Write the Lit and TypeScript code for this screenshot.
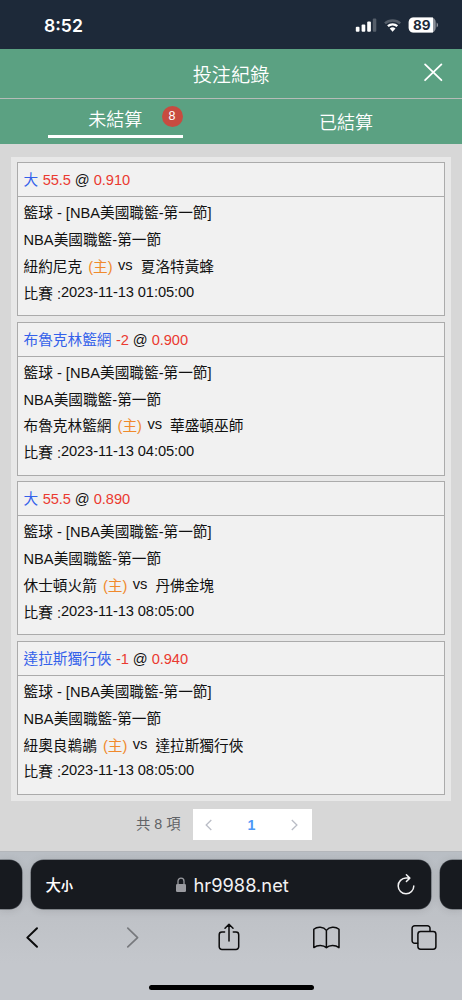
import { LitElement, html, css } from "lit";
import { customElement, property } from "lit/decorators.js";

interface Bet {
  pick: string;
  line: string;
  odds: string;
  home: string;
  away: string;
  time: string;
}

const BETS: Bet[] = [
  { pick: "大", line: "55.5", odds: "0.910", home: "紐約尼克", away: "夏洛特黃蜂", time: "2023-11-13 01:05:00" },
  { pick: "布魯克林籃網", line: "-2", odds: "0.900", home: "布魯克林籃網", away: "華盛頓巫師", time: "2023-11-13 04:05:00" },
  { pick: "大", line: "55.5", odds: "0.890", home: "休士頓火箭", away: "丹佛金塊", time: "2023-11-13 08:05:00" },
  { pick: "達拉斯獨行俠", line: "-1", odds: "0.940", home: "紐奧良鵜鶘", away: "達拉斯獨行俠", time: "2023-11-13 08:05:00" },
];

@customElement("status-bar")
class StatusBar extends LitElement {
  static styles = css`
    :host {
      display: flex;
      justify-content: space-between;
      box-sizing: border-box;
      height: 49px;
      padding: 0 24px 0 44px;
      background: #1d2939;
      color: #fff;
      font-family: Inter, sans-serif;
    }
    .time {
      padding-top: 14px;
      font-size: 17.6px;
      font-weight: 600;
      line-height: 23px;
    }
    .icons {
      display: flex;
      padding-top: 16px;
    }
    svg {
      display: block;
    }
    .level {
      font: 700 13.5px Inter, sans-serif;
    }
  `;
  render() {
    return html`
      <div class="time">8:52</div>
      <div class="icons">
        <svg width="84" height="18" viewBox="0 0 84 18">
          <g fill="#fff">
            <rect x="1.8" y="10.8" width="3.7" height="5" rx="1" />
            <rect x="7.6" y="8.6" width="3.7" height="7.2" rx="1" />
            <rect x="13.2" y="5.4" width="3.7" height="10.4" rx="1" />
            <rect x="18.8" y="2.6" width="3.5" height="13.2" rx="1" opacity=".25" />
          </g>
          <g fill="none" stroke="#fff">
            <path d="M31 7.4a11.2 11.2 0 0 1 15.2 0" stroke-width="2.5" opacity=".25" />
            <path d="M33.9 10.2a7 7 0 0 1 9.4 0" stroke-width="2.4" />
          </g>
          <path d="M35.7 12.4a4.4 4.4 0 0 1 5.8 0L38.6 15.8z" fill="#fff" />
          <rect x="54.7" y="1.4" width="27" height="15.2" rx="4.6" fill="#8b9099" />
          <path d="M59.3 1.4H79V16.6H59.3a4.6 4.6 0 0 1-4.6-4.6V6a4.6 4.6 0 0 1 4.6-4.6z" fill="#fff" />
          <path d="M82.6 6.6v4.8a2.7 2.7 0 0 0 0-4.8z" fill="#8b9099" />
          <text class="level" x="67.7" y="13.9" text-anchor="middle" fill="#1d2939">89</text>
        </svg>
      </div>
    `;
  }
}

@customElement("page-header")
class PageHeader extends LitElement {
  static styles = css`
    :host {
      display: block;
      background: #5ba182;
      color: #fff;
      font-family: "Noto Sans CJK TC", sans-serif;
      font-weight: 350;
    }
    .title-row {
      display: grid;
      grid-template-columns: 60px 1fr 60px;
      box-sizing: border-box;
      height: 50px;
      border-bottom: 1px solid #b5bcb8;
    }
    .title {
      grid-column: 2;
      text-align: center;
      font-size: 19.2px;
      line-height: 50px;
    }
    .close {
      padding: 13px 0 0 20px;
    }
    svg {
      display: block;
    }
    .tabs {
      display: grid;
      grid-template-columns: 1fr 1fr;
      height: 45px;
      font-size: 18px;
    }
    .tab {
      display: flex;
      justify-content: center;
    }
    .active {
      position: relative;
      box-sizing: border-box;
      width: 134.5px;
      height: 39px;
      margin-left: 48px;
      border-bottom: 3px solid #fff;
      line-height: 38px;
    }
    .settled {
      line-height: 45px;
      padding-right: 1px;
    }
    .badge {
      position: absolute;
      right: 0;
      top: 6.5px;
      width: 21px;
      height: 21px;
      border-radius: 50%;
      background: #c84b40;
      font: 12.5px/21px "Liberation Sans", sans-serif;
      text-align: center;
    }
  `;
  render() {
    return html`
      <div class="title-row">
        <div class="title">投注紀錄</div>
        <div class="close">
          <svg width="22" height="22" viewBox="0 0 22 22" fill="none" stroke="#fff" stroke-width="1.8" stroke-linecap="round">
            <path d="M3.1 2.4 19.4 18.2M19.4 2.4 3.1 18.2" />
          </svg>
        </div>
      </div>
      <div class="tabs">
        <div class="tab active">未結算<span class="badge">8</span></div>
        <div class="tab settled">已結算</div>
      </div>
    `;
  }
}

@customElement("bet-card")
class BetCard extends LitElement {
  @property({ attribute: false }) bet!: Bet;

  static styles = css`
    :host {
      display: block;
      box-sizing: border-box;
      height: 154px;
      border: 1px solid #ababab;
      background: #f1f1f1;
      color: #111;
      font: 14.67px "Liberation Sans", "Noto Sans CJK TC", sans-serif;
    }
    .head {
      height: 33px;
      padding-left: 5.5px;
      border-bottom: 1px solid #ababab;
      line-height: 34px;
      white-space: pre;
    }
    .body {
      padding: 3.2px 0 0 5.5px;
    }
    .row {
      height: 26.8px;
      line-height: 27px;
      white-space: pre;
    }
    .pick {
      margin-right: 0.4px;
      color: #3461ea;
    }
    .red {
      color: #ea3a30;
      letter-spacing: -0.1px;
    }
    .host {
      margin: 0 1.5px 0 2px;
      color: #f08a2c;
    }
    .up {
      line-height: 20px;
      vertical-align: 2px;
      letter-spacing: -0.1px;
    }
    .away {
      margin-left: 4.2px;
    }
  `;
  render() {
    const b = this.bet;
    return html`
      <div class="head"><span class="pick">${b.pick}</span> <span class="red">${b.line}</span> @ <span class="red">${b.odds}</span></div>
      <div class="body">
        <div class="row">籃球 - [NBA美國職籃-第一節]</div>
        <div class="row">NBA美國職籃-第一節</div>
        <div class="row">${b.home} <span class="host">(主)</span><span class="up"> vs </span><span class="away">${b.away}</span></div>
        <div class="row">比賽 :<span class="up">${b.time}</span></div>
      </div>
    `;
  }
}

@customElement("list-pager")
class ListPager extends LitElement {
  static styles = css`
    :host {
      display: flex;
      padding: 8px 0 0 136px;
      font: 14.3px "Liberation Sans", "Noto Sans CJK TC", sans-serif;
    }
    .total {
      width: 57px;
      color: #616366;
      line-height: 31px;
      white-space: nowrap;
    }
    .pages {
      display: grid;
      grid-template-columns: 1fr 1fr 1fr;
      place-items: center;
      width: 119px;
      height: 31px;
      background: #fff;
    }
    .current {
      color: #4c98f7;
      font-weight: 700;
      padding-right: 2px;
    }
    svg {
      display: block;
      fill: none;
      stroke: #babdc6;
      stroke-width: 1.3;
    }
    .back {
      margin-right: 5px;
    }
    .forward {
      margin-left: 2px;
    }
  `;
  render() {
    return html`
      <div class="total">共 8 項</div>
      <div class="pages">
        <svg class="back" width="12" height="12" viewBox="0 0 12 12"><path d="M7.3 1 2.2 6l5.1 5" /></svg>
        <span class="current">1</span>
        <svg class="forward" width="12" height="12" viewBox="0 0 12 12"><path d="M4.8 1 9.9 6l-5.1 5" /></svg>
      </div>
    `;
  }
}

@customElement("browser-bar")
class BrowserBar extends LitElement {
  static styles = css`
    :host {
      display: block;
      box-sizing: border-box;
      height: 149px;
      border-top: 1px solid #b4b7bb;
      background: linear-gradient(#b9bec4, #bfc2c7 45%, #c4c7cc 75%);
      overflow: hidden;
    }
    svg {
      display: block;
    }
    .pills {
      display: grid;
      grid-template-columns: 22px 400px 22px;
      column-gap: 9px;
      height: 49px;
      padding-top: 8px;
    }
    .pill {
      background: #171a1f;
      border-radius: 12.5px;
      box-shadow: 0 1px 8px rgba(0, 0, 0, 0.12), 0 0 0 0.5px #555a60;
    }
    .prev {
      border-radius: 0 12.5px 12.5px 0;
    }
    .next {
      border-radius: 12.5px 0 0 12.5px;
    }
    .address {
      display: grid;
      grid-template-columns: 144px 1fr 36px;
      align-items: center;
      color: #fff;
    }
    .size {
      padding-left: 14.5px;
      font: 500 15.5px/24px "Noto Sans CJK TC", sans-serif;
    }
    .small {
      font-size: 12px;
      font-weight: 700;
    }
    .site {
      display: flex;
      align-items: center;
      gap: 6.5px;
      font: 18.3px/24px Inter, sans-serif;
      color: #f2f2f3;
    }
    .tools {
      display: block;
      margin-top: 8px;
    }
    .home {
      width: 165px;
      height: 5.6px;
      margin: 19.5px auto 0;
      border-radius: 3px;
      background: #000;
    }
  `;
  render() {
    return html`
      <div class="pills">
        <div class="pill prev"></div>
        <div class="pill address">
          <div class="size">大<span class="small">小</span></div>
          <div class="site">
            <svg width="12" height="16" viewBox="0 0 12 16">
              <rect x="1" y="7" width="10" height="8" rx="1.3" fill="#9a9ba0" />
              <path d="M3 7.5V4.2a3 3 0 0 1 6 0v3.3" fill="none" stroke="#9a9ba0" stroke-width="1.3" />
            </svg>
            <span>hr9988.net</span>
          </div>
          <svg width="22" height="24" viewBox="0 0 22 24" fill="none" stroke="#f2f2f3" stroke-width="1.5" stroke-linecap="round" stroke-linejoin="round">
            <path d="M18.8 12.9A7.8 7.8 0 1 1 11 5.1H14.7M11.4 1.7 14.8 5.1 11.4 8.5" />
          </svg>
        </div>
        <div class="pill next"></div>
      </div>
      <svg class="tools" width="462" height="48" viewBox="0 917 462 48" fill="none" stroke="#0b0b0c" stroke-width="1.5" stroke-linecap="round" stroke-linejoin="round">
        <path d="M37 928.2 27.3 937.6 37 946.8" stroke-width="2" />
        <path d="M127.8 928.2 137.6 937.6 127.8 946.8" stroke="#77797d" stroke-width="1.7" />
        <path d="M224.6 932H221.9a2.7 2.7 0 0 0-2.7 2.7v12a2.7 2.7 0 0 0 2.7 2.7H236a2.7 2.7 0 0 0 2.7-2.7v-12A2.7 2.7 0 0 0 236 932H233.3M229 941V924.3M225 928.2 229 924.2 233 928.2" />
        <path d="M326.4 930.4C323.5 926.6 317.5 926.2 313.8 929.3V947.6C317.5 944.7 323.5 944.8 326.4 947.8C329.3 944.8 335.3 944.7 339 947.6V929.3C335.3 926.2 329.3 926.6 326.4 930.4ZV947.8" />
        <path d="M417.6 943.3H414.7a2.6 2.6 0 0 1-2.6-2.6V928.3a2.6 2.6 0 0 1 2.6-2.6H427.4a2.6 2.6 0 0 1 2.6 2.6V931.3" />
        <rect x="417.9" y="931.6" width="18" height="17.6" rx="2.7" />
      </svg>
      <div class="home"></div>
    `;
  }
}

@customElement("app-root")
class AppRoot extends LitElement {
  static styles = css`
    :host {
      display: flex;
      flex-direction: column;
      width: 462px;
      height: 1000px;
      background: #d7d7d7;
      overflow: hidden;
    }
    .list {
      display: flex;
      flex-direction: column;
      gap: 5.6px;
      box-sizing: border-box;
      height: 644px;
      margin: 13px 11px 0;
      padding: 5px 6px 0;
      background: #e8e8e8;
    }
    .browser {
      margin-top: auto;
    }
  `;
  render() {
    return html`
      <status-bar></status-bar>
      <page-header></page-header>
      <main class="list">${BETS.map((bet) => html`<bet-card .bet=${bet}></bet-card>`)}</main>
      <list-pager></list-pager>
      <browser-bar class="browser"></browser-bar>
    `;
  }
}
